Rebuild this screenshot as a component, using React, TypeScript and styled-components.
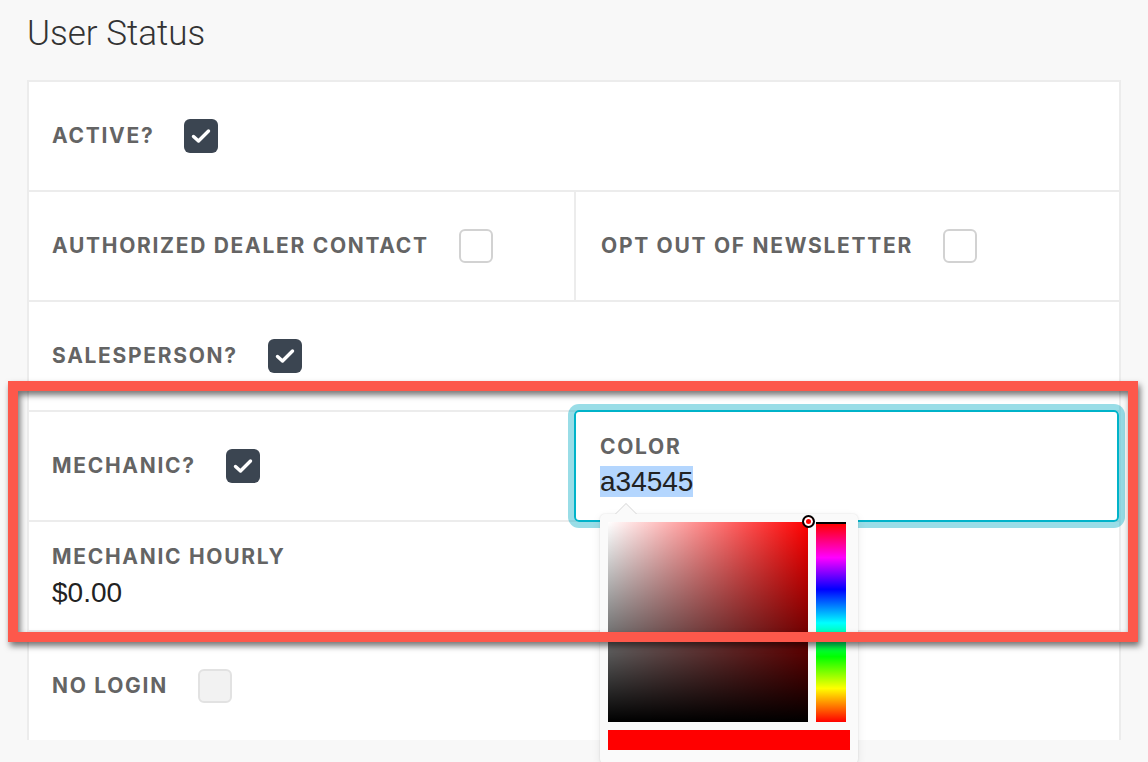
import React from "react";
import styled, { createGlobalStyle } from "styled-components";

const GlobalStyle = createGlobalStyle`
  html, body {
    margin: 0;
    padding: 0;
    background: #f8f8f8;
  }
  * {
    box-sizing: border-box;
  }
`;

const Page = styled.div`
  position: relative;
  min-height: 762px;
  padding: 14px 27px 22px;
  overflow: hidden;
`;

const Title = styled.h2`
  margin: 0 0 26px;
  font-family: "Roboto", "Liberation Sans", sans-serif;
  font-weight: 300;
  font-size: 35px;
  line-height: 40px;
  color: #333;
`;

const Card = styled.div`
  background: #fff;
  border: 2px solid #ececec;
  border-bottom: none;
`;

const Row = styled.div`
  display: flex;
  & + & {
    border-top: 2px solid #ececec;
  }
`;

const Cell = styled.div<{ $field?: boolean }>`
  flex: 1 1 50%;
  height: 108px;
  padding: 0 23px;
  display: flex;
  flex-direction: ${({ $field }) => ($field ? "column" : "row")};
  justify-content: ${({ $field }) => ($field ? "center" : "flex-start")};
  align-items: ${({ $field }) => ($field ? "flex-start" : "center")};
  gap: ${({ $field }) => ($field ? "8px" : "30px")};
  & + & {
    border-left: 2px solid #ececec;
    padding-left: 25px;
  }
`;

// focused colour input, drawn over the row dividers
const ColorCell = styled.div`
  position: relative;
  z-index: 2;
  flex: 1 1 50%;
  margin: -2px 0 -2px 0;
  padding: 0 24px;
  display: flex;
  flex-direction: column;
  justify-content: center;
  gap: 7px;
  border: 2px solid #00b3c9;
  border-radius: 5px;
  box-shadow: 0 0 0 6px rgba(0, 170, 195, 0.4);
`;

const Label = styled.span`
  font-family: "Inter", "Liberation Sans", sans-serif;
  font-weight: 700;
  font-size: 21px;
  line-height: 24px;
  letter-spacing: 1.7px;
  color: #646464;
  text-transform: uppercase;
  white-space: nowrap;
`;

const Value = styled.span`
  font-family: "Liberation Sans", Arial, sans-serif;
  font-size: 28px;
  line-height: 31px;
  color: #222;
`;

const Selected = styled.span`
  background: #b4d6fe;
`;

const Box = styled.span<{ $checked?: boolean; $disabled?: boolean }>`
  width: 34px;
  height: 34px;
  flex: none;
  display: flex;
  align-items: center;
  justify-content: center;
  border-radius: 6px;
  background: ${({ $checked, $disabled }) =>
    $checked ? "#3b4551" : $disabled ? "#f2f2f2" : "#fff"};
  border: ${({ $checked, $disabled }) =>
    $checked ? "none" : $disabled ? "2px solid #e2e2e2" : "2px solid #d2d2d2"};
`;

const Picker = styled.div`
  position: absolute;
  left: 24px;
  top: 102px;
  width: 258px;
  padding: 8px 8px 14px;
  background: #fafafa;
  border-radius: 5px;
  box-shadow: 0 0 2px rgba(0, 0, 0, 0.12), 0 3px 10px rgba(0, 0, 0, 0.08);
  &::before,
  &::after {
    content: "";
    position: absolute;
    left: 15px;
    border: 11px solid transparent;
    border-top: none;
  }
  &::before {
    top: -11px;
    border-bottom: 11px solid #d6d6d6;
  }
  &::after {
    top: -10px;
    border-bottom: 11px solid #fafafa;
  }
`;

const PickerTop = styled.div`
  display: flex;
  gap: 8px;
`;

const Saturation = styled.div`
  position: relative;
  width: 200px;
  height: 200px;
  background: linear-gradient(to bottom, rgba(0, 0, 0, 0), #000),
    linear-gradient(to right, #fff, rgba(255, 255, 255, 0)), #f00;
`;

const Pointer = styled.span`
  position: absolute;
  right: -7px;
  top: -7px;
  width: 13px;
  height: 13px;
  border-radius: 50%;
  border: 2px solid #000;
  box-shadow: inset 0 0 0 2px #fff;
  background: #f00;
`;

const Hue = styled.div`
  width: 30px;
  height: 200px;
  border-top: 2px solid #000;
  background: linear-gradient(
    to bottom,
    #f00 0%,
    #f0f 17%,
    #00f 33%,
    #0ff 50%,
    #0f0 67%,
    #ff0 83%,
    #f00 100%
  );
`;

const Swatch = styled.div<{ $color: string }>`
  margin-top: 8px;
  height: 20px;
  background: ${({ $color }) => $color};
`;

const Annotation = styled.div`
  position: absolute;
  z-index: 5;
  left: 8px;
  top: 381px;
  width: 1130px;
  height: 261px;
  border: 10px solid #fd584b;
  filter: drop-shadow(2px 4px 3px rgba(0, 0, 0, 0.55));
  pointer-events: none;
`;

const Check: React.FC<{ checked?: boolean; disabled?: boolean }> = ({
  checked,
  disabled,
}) => (
  <Box $checked={checked} $disabled={disabled}>
    {checked && (
      <svg width="20" height="16" viewBox="0 0 20 16">
        <path
          d="M2.5 8.5 L7.5 13 L17.5 3"
          fill="none"
          stroke="#fff"
          strokeWidth="3.4"
          strokeLinecap="round"
          strokeLinejoin="round"
        />
      </svg>
    )}
  </Box>
);

const App: React.FC = () => {
  return (
    <Page>
      <GlobalStyle />
      <Title>User Status</Title>
      <Card>
        <Row>
          <Cell>
            <Label>Active?</Label>
            <Check checked />
          </Cell>
        </Row>
        <Row>
          <Cell>
            <Label>Authorized Dealer Contact</Label>
            <Check />
          </Cell>
          <Cell>
            <Label>Opt Out of Newsletter</Label>
            <Check />
          </Cell>
        </Row>
        <Row>
          <Cell>
            <Label>Salesperson?</Label>
            <Check checked />
          </Cell>
        </Row>
        <Row>
          <Cell>
            <Label>Mechanic?</Label>
            <Check checked />
          </Cell>
          <ColorCell>
            <Label>Color</Label>
            <Value>
              <Selected>a34545</Selected>
            </Value>
            <Picker>
              <PickerTop>
                <Saturation>
                  <Pointer />
                </Saturation>
                <Hue />
              </PickerTop>
              <Swatch $color="#ff0000" />
            </Picker>
          </ColorCell>
        </Row>
        <Row>
          <Cell $field>
            <Label>Mechanic Hourly</Label>
            <Value>$0.00</Value>
          </Cell>
        </Row>
        <Row>
          <Cell>
            <Label>No Login</Label>
            <Check disabled />
          </Cell>
        </Row>
      </Card>
      <Annotation />
    </Page>
  );
};

export default App;
